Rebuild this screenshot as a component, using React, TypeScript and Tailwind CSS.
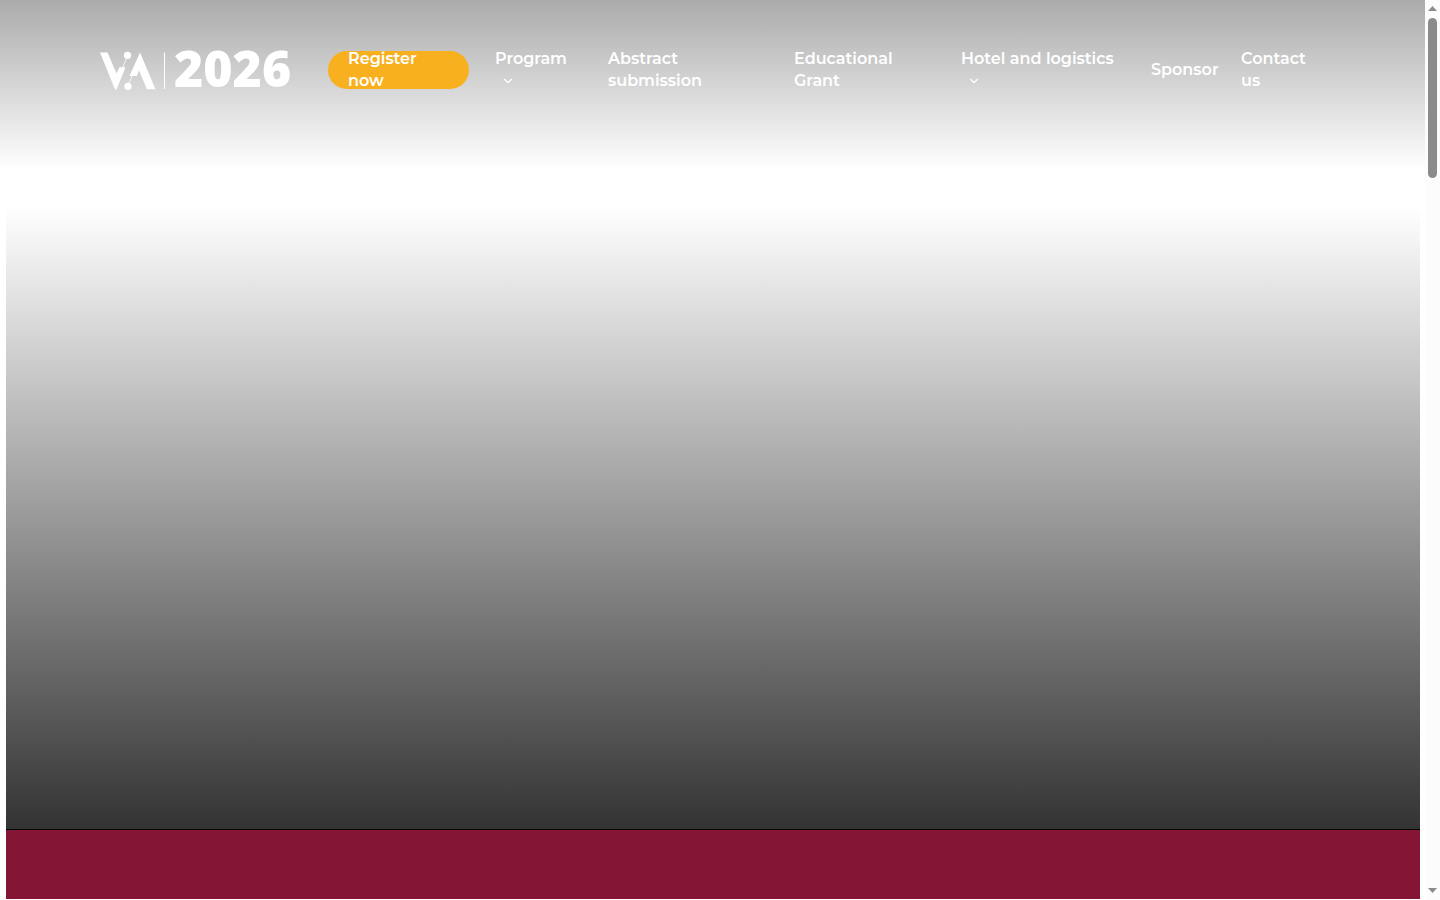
import { ChevronDown } from "lucide-react";
import { clsx } from "clsx";

interface NavItem {
  text: string;
  href: string;
  className: string;
  hasMenu?: boolean;
}

const navItems: NavItem[] = [
  { text: "Program", href: "#program", className: "basis-[113px]", hasMenu: true },
  { text: "Abstract submission", href: "#abstracts", className: "basis-[186px] pr-16" },
  { text: "Educational Grant", href: "#grant", className: "basis-[167px] pr-12" },
  { text: "Hotel and logistics", href: "#hotel", className: "basis-[190px]", hasMenu: true },
  { text: "Sponsor", href: "#sponsor", className: "basis-[90px]" },
  { text: "Contact us", href: "#contact", className: "basis-[98px]" },
];

function Logo() {
  return (
    <a href="#home" aria-label="VIA 2026" className="flex h-10 w-[192px] shrink-0 items-center">
      <svg viewBox="0 0 66 40" className="h-10 w-[66px] shrink-0" fill="#fff" aria-hidden="true">
        <path d="M0 2.5H7.5L16.5 23.5L19.5 17.3H25.5L16.5 39.5H15Z" />
        <path d="M40 2.5L55.5 39.3H47L39 20.5L36.8 26H29.5Z" />
        <circle cx="27.5" cy="5.3" r="3.6" />
        <circle cx="28" cy="36.3" r="3.6" />
        <path d="M27 7L22.5 18M28.5 35L32 26" stroke="#fff" strokeWidth="0.8" />
        <path d="M64.5 2.5V39" stroke="#fff" strokeWidth="1" />
      </svg>
      <span className="ml-2 pb-1 font-['Open_Sans',sans-serif] text-[50px] leading-10 font-extrabold">
        2026
      </span>
    </a>
  );
}

function Header() {
  return (
    <header className="absolute inset-x-0 top-0 h-[170px] bg-linear-to-b from-black/33 to-transparent">
      <div className="flex h-[140px] items-center px-[100px] text-white">
        <Logo />
        <nav className="ml-9 flex flex-1 items-center font-[Montserrat,Inter,sans-serif] text-base leading-[22px] font-semibold">
          <a
            href="#register"
            className="mr-[15px] flex h-[38px] w-[141px] shrink-0 items-center rounded-full bg-[#f9b01e] pr-10 pl-5"
          >
            Register now
          </a>
          {navItems.map((item) => (
            <a
              key={item.href}
              href={item.href}
              className={clsx("shrink-0 px-[11px]", item.className)}
            >
              {item.text}
              {item.hasMenu && (
                <span className="flex h-[22px] items-center pl-1.5">
                  <ChevronDown className="size-3.5" strokeWidth={2} />
                </span>
              )}
            </a>
          ))}
        </nav>
      </div>
    </header>
  );
}

function ScrollRail() {
  return (
    <div className="flex w-[15px] shrink-0 flex-col items-center bg-[#fcfcfc]" aria-hidden="true">
      <svg viewBox="0 0 15 18" className="h-[18px] w-[15px]" fill="#8b8b8b">
        <path d="M3 11L7.5 6L12 11Z" />
      </svg>
      <div className="h-40 w-[9px] rounded-full bg-[#8b8b8b]" />
      <svg viewBox="0 0 15 18" className="mt-auto h-[18px] w-[15px]" fill="#8b8b8b">
        <path d="M3 6L7.5 11L12 6Z" />
      </svg>
    </div>
  );
}

export default function App() {
  return (
    <div className="flex h-screen bg-white">
      <div className="relative flex min-w-0 flex-1 flex-col">
        <Header />
        <main className="mr-[5px] mb-px ml-1.5 flex flex-1 flex-col">
          <section className="flex-1 border-b border-black bg-linear-to-b/srgb from-white from-25% to-[#333]" />
          <section className="h-[69px] bg-[#851535]" />
        </main>
      </div>
      <ScrollRail />
    </div>
  );
}
